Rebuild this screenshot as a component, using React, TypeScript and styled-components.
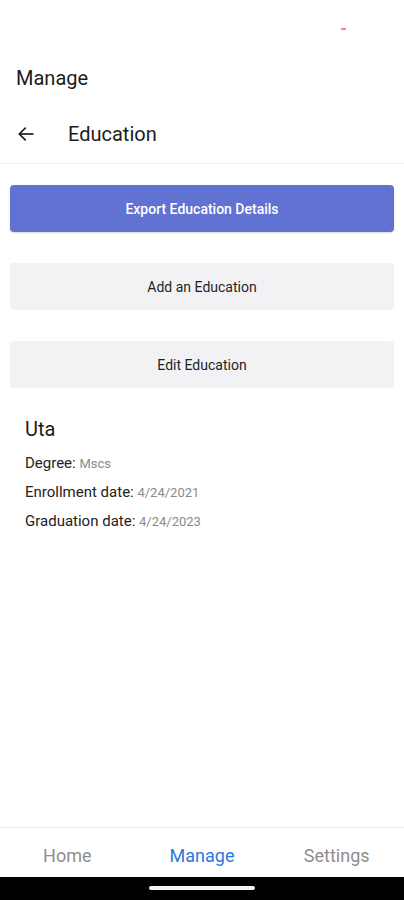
import styled, { createGlobalStyle } from "styled-components";

const GlobalStyle = createGlobalStyle`
    html, body {
        margin: 0;
        padding: 0;
        background: #ffffff;
        font-family: Roboto, "Liberation Sans", sans-serif;
    }
`;

const Screen = styled.div`
    display: flex;
    flex-direction: column;
    width: 404px;
    height: 900px;
    background: #ffffff;
    overflow: hidden;
`;

const StatusBar = styled.div`
    height: 50px;
    display: flex;
    justify-content: flex-end;
    padding-right: 58px;
    box-sizing: border-box;
`;

const RedDot = styled.span`
    margin-top: 28px;
    width: 5px;
    height: 2px;
    background: #f08a8a;
`;

const PageTitle = styled.div`
    height: 55px;
    display: flex;
    align-items: center;
    padding: 0 16px;
    font-size: 20px;
    color: #1c1c1c;
`;

const Header = styled.div`
    height: 58px;
    display: flex;
    align-items: center;
    border-bottom: 1px solid #f0f0f2;
    padding-left: 16px;
`;

const BackButton = styled.button`
    display: flex;
    align-items: center;
    background: none;
    border: none;
    padding: 0;
    width: 52px;
    color: #1c1c1c;
`;

const HeaderTitle = styled.div`
    font-size: 20px;
    color: #1c1c1c;
`;

const Content = styled.div`
    flex: 1;
    display: flex;
    flex-direction: column;
    padding: 21px 10px 0 10px;
`;

const ActionButton = styled.button<{ $primary?: boolean }>`
    height: 47px;
    margin-bottom: 31px;
    border: none;
    border-radius: 4px;
    font-family: Roboto, "Liberation Sans", sans-serif;
    font-size: 14px;
    font-weight: ${(p) => (p.$primary ? 500 : 400)};
    color: ${(p) => (p.$primary ? "#ffffff" : "#1f1f1f")};
    background: ${(p) => (p.$primary ? "#6172d3" : "#f2f2f5")};
    box-shadow: ${(p) => (p.$primary ? "0 1px 2px rgba(0,0,0,0.15)" : "none")};
`;

const Info = styled.div`
    display: flex;
    flex-direction: column;
    margin-top: -2px;
    padding: 0 15px;
`;

const InfoTitle = styled.div`
    font-size: 20px;
    line-height: 24px;
    color: #1c1c1c;
    margin-bottom: 8px;
`;

const InfoRow = styled.div`
    font-size: 15px;
    line-height: 29px;
    color: #222222;
`;

const InfoValue = styled.span`
    font-size: 13px;
    color: #8a8a8a;
`;

const TabBar = styled.div`
    height: 50px;
    display: flex;
    border-top: 1px solid #ececee;
    box-sizing: border-box;
`;

const Tab = styled.div<{ $active?: boolean }>`
    flex: 1;
    display: flex;
    align-items: center;
    justify-content: center;
    font-size: 18px;
    padding-top: 6px;
    color: ${(p) => (p.$active ? "#2a7ae2" : "#8e8e8e")};
`;

const NavBar = styled.div`
    height: 23px;
    background: #000000;
    display: flex;
    justify-content: center;
    padding-top: 9px;
    box-sizing: border-box;
`;

const HomePill = styled.div`
    width: 106px;
    height: 4px;
    border-radius: 2px;
    background: #f2f2f2;
`;

const App = () => {
    return (
        <Screen>
            <GlobalStyle />
            <StatusBar>
                <RedDot />
            </StatusBar>
            <PageTitle>Manage</PageTitle>
            <Header>
                <BackButton>
                    <svg width="20" height="20" viewBox="0 0 24 24" fill="none" stroke="currentColor" strokeWidth="2" strokeLinecap="square">
                        <path d="M20 12H5" />
                        <path d="M11 5l-7 7 7 7" />
                    </svg>
                </BackButton>
                <HeaderTitle>Education</HeaderTitle>
            </Header>
            <Content>
                <ActionButton $primary>Export Education Details</ActionButton>
                <ActionButton>Add an Education</ActionButton>
                <ActionButton>Edit Education</ActionButton>
                <Info>
                    <InfoTitle>Uta</InfoTitle>
                    <InfoRow>
                        Degree: <InfoValue>Mscs</InfoValue>
                    </InfoRow>
                    <InfoRow>
                        Enrollment date: <InfoValue>4/24/2021</InfoValue>
                    </InfoRow>
                    <InfoRow>
                        Graduation date: <InfoValue>4/24/2023</InfoValue>
                    </InfoRow>
                </Info>
            </Content>
            <TabBar>
                <Tab>Home</Tab>
                <Tab $active>Manage</Tab>
                <Tab>Settings</Tab>
            </TabBar>
            <NavBar>
                <HomePill />
            </NavBar>
        </Screen>
    );
};
export default App;
